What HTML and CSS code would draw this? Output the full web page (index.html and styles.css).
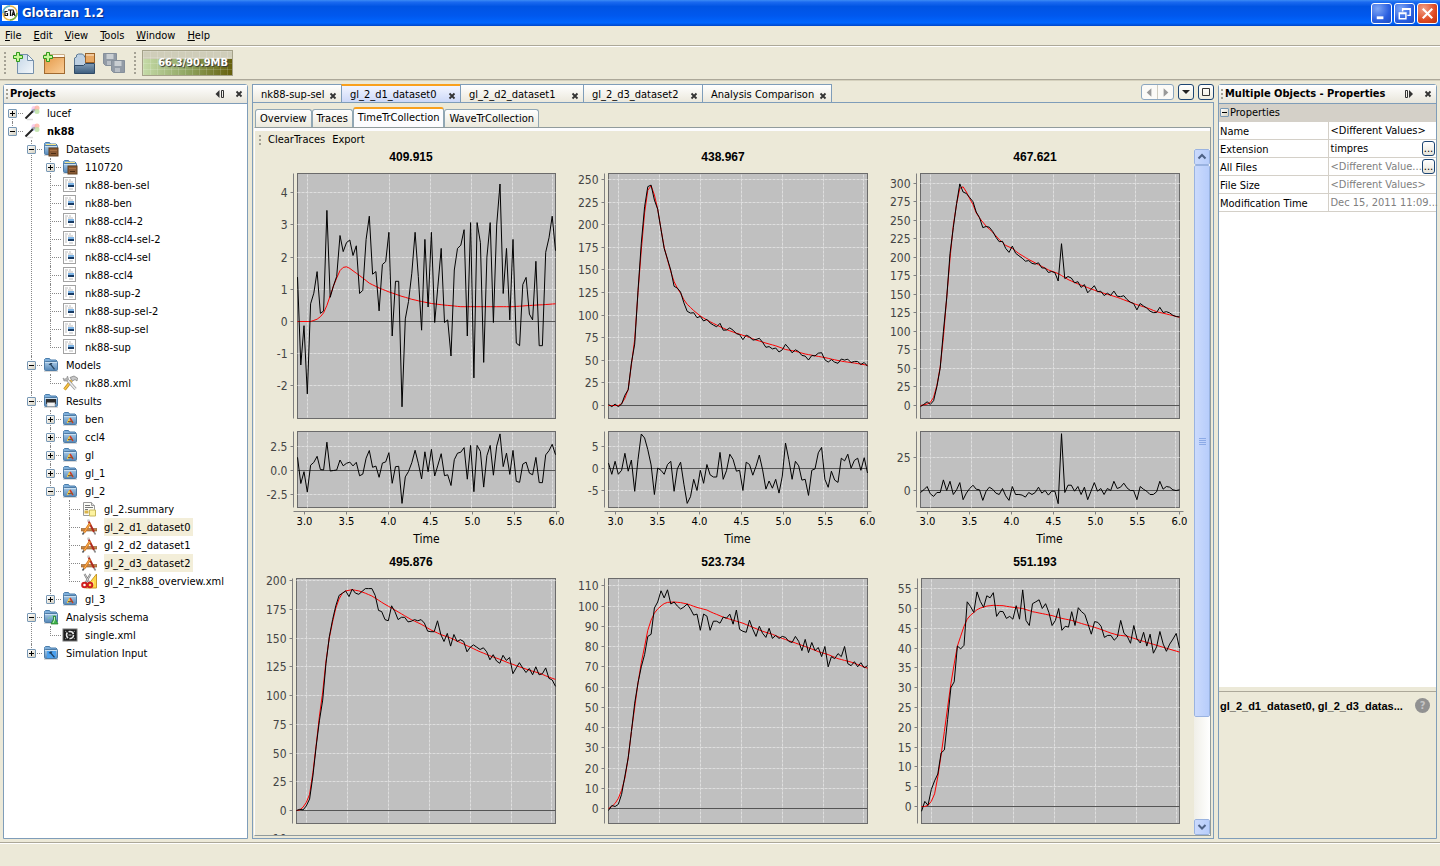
FILE: index.html
```html
<!DOCTYPE html>
<html lang="en">
<head>
    <meta charset="UTF-8">
    <meta name="viewport" content="width=device-width, initial-scale=1.0">
    <title>Glotaran 1.2</title>
    <link rel="stylesheet" href="styles.css">
</head>
<body>
    <!-- Icon set used by the tree and the toolbars -->
    <svg class="icon-set" width="0" height="0" aria-hidden="true">
        <defs>
            <linearGradient id="blueFolder" x1="0" y1="0" x2="0" y2="1">
                <stop offset="0" stop-color="#a9cbe8"/>
                <stop offset="1" stop-color="#5688b8"/>
            </linearGradient>
            <linearGradient id="paper" x1="0" y1="0" x2="1" y2="1">
                <stop offset="0" stop-color="#c3d5e6"/>
                <stop offset="1" stop-color="#f4f8fb"/>
            </linearGradient>
            <linearGradient id="orangeBox" x1="0" y1="0" x2="1" y2="1">
                <stop offset="0" stop-color="#e59a4a"/>
                <stop offset="1" stop-color="#fad09a"/>
            </linearGradient>
            <linearGradient id="openFolder" x1="0" y1="0" x2="0" y2="1">
                <stop offset="0" stop-color="#7f9bb5"/>
                <stop offset="1" stop-color="#3d5d7d"/>
            </linearGradient>
        </defs>
        <symbol id="i-folder" viewBox="0 0 16 16">
            <path d="M1.500 3.500v-1l1-1h4l1 1.500h5.500l1 1v3h-12.500z" fill="#7fb0dc" stroke="#4a7dab"/>
            <rect x="1.500" y="4.500" width="13" height="9" rx="1" fill="url(#blueFolder)" stroke="#4f7ca6"/>
            <path d="M2 5.500h12" stroke="#c9dff1"/>
            <path d="M1 14.500h14" stroke="#d8d8d8"/>
        </symbol>
        <symbol id="i-wand" viewBox="0 0 16 16">
            <circle cx="10" cy="3.500" r="2.500" fill="#f6c0e8" opacity=".8"/>
            <circle cx="13" cy="3" r="2.500" fill="#ffb3a0" opacity=".8"/>
            <circle cx="13" cy="6.500" r="2.500" fill="#b8e0a0" opacity=".8"/>
            <circle cx="9" cy="6" r="2" fill="#b8c8ff" opacity=".8"/>
            <path d="M3 14.500h6" stroke="#ddd" stroke-width="1.500"/>
            <path d="M1.500 13.500l8-8" stroke="#222" stroke-width="2"/>
            <path d="M8.800 6.200l2-2" stroke="#aaa" stroke-width="2"/>
        </symbol>
        <symbol id="i-folder-data" viewBox="0 0 16 16">
            <use href="#i-folder"/>
            <path d="M3 3.500h10" stroke="#f5e58a"/>
            <rect x="6" y="7" width="9" height="8" fill="#8a5a35" stroke="#63401f"/>
            <path d="M7 9.500h7" stroke="#a87245"/>
            <path d="M8 12.500h5" stroke="#4a2d14"/>
        </symbol>
        <symbol id="i-data" viewBox="0 0 16 16">
            <rect x="1.500" y=".5" width="12" height="14" fill="#fff" stroke="#a3a3a3"/>
            <path d="M3 3h3M7 3h2M3 5h2M6 5h5M3 7h2M3 9h2M3 11h2M7 12h4" stroke="#bbb"/>
            <rect x="6" y="6" width="6" height="4" fill="#7db4e6"/>
            <rect x="6" y="8" width="6" height="2" fill="#173a63"/>
        </symbol>
        <symbol id="i-folder-model" viewBox="0 0 16 16">
            <use href="#i-folder"/>
            <path d="M5.500 7.500l2-1.500h2l-1 1.500 3.500 4.500-1 .8-3.500-4.600z" fill="#27445f"/>
        </symbol>
        <symbol id="i-tools" viewBox="0 0 16 16">
            <path d="M2.500 14.500l7-9" stroke="#c08a1c" stroke-width="3"/>
            <path d="M2.500 14.500l7-9" stroke="#f6c44a" stroke-width="1.600"/>
            <path d="M13.500 14l-8-9" stroke="#9a9a9a" stroke-width="3"/>
            <path d="M13.500 14l-8-9" stroke="#ededed" stroke-width="1.500"/>
            <path d="M1 3l1 3h3l1.500-2-1-3-1 2.500-2 .5z" fill="#b8b8b8" stroke="#888" stroke-width=".6"/>
            <path d="M8 2.500l4-1.500 3.500 2-.5 3-2-1.500-2.500 1.500z" fill="#c8c8c8" stroke="#777" stroke-width=".7"/>
        </symbol>
        <symbol id="i-folder-results" viewBox="0 0 16 16">
            <use href="#i-folder"/>
            <rect x="3" y="6" width="10" height="5" fill="#2b2b2b"/>
            <path d="M4 9.500h8v4h-8z" fill="#f2f2f2" stroke="#888" stroke-width=".5"/>
        </symbol>
        <symbol id="i-folder-app" viewBox="0 0 16 16">
            <use href="#i-folder"/>
            <path d="M5.500 12l2.500-5" stroke="#ffd23c" stroke-width="1.500"/>
            <path d="M8 7l3 5" stroke="#d13a22" stroke-width="1.500"/>
            <path d="M6 10.500h5" stroke="#8a5a2b"/>
        </symbol>
        <symbol id="i-summary" viewBox="0 0 16 16">
            <path d="M2.500 1.500h8l3 3v10h-11z" fill="#fbfbf6" stroke="#999"/>
            <path d="M10.500 1.500v3h3" fill="#ddd" stroke="#999"/>
            <path d="M4 4.500h5M4 6.500h8M4 8.500h3" stroke="#777"/>
            <rect x="3.500" y="9.500" width="4" height="3" fill="#d9b34a"/>
            <path d="M8.500 9h6v6h-6z" fill="#fdf3a0" stroke="#c9b85c"/>
        </symbol>
        <symbol id="i-app" viewBox="0 0 16 16">
            <path d="M0 9.500h16v2.500h-16z" fill="#c2854a" stroke="#8a5a2b" stroke-width=".6"/>
            <path d="M7.500 2l5.500 11" stroke="#b02a1c" stroke-width="2"/>
            <path d="M13 13l1.500 2.500" stroke="#888" stroke-width="1.500"/>
            <path d="M3 13.500l6-9" stroke="#d9781a" stroke-width="2.400"/>
            <path d="M3 13.500l6-9" stroke="#fbb45a"/>
            <path d="M1.500 15.500l1.500-2" stroke="#555" stroke-width="1.500"/>
            <circle cx="7.500" cy="1.500" r="1.300" fill="#c8c8c8"/>
        </symbol>
        <symbol id="i-cut" viewBox="0 0 16 16">
            <path d="M15.500 1v14h-11z" fill="#ffd84a" stroke="#c9982a"/>
            <path d="M12.500 8v4h-3z" fill="#fff6cc"/>
            <path d="M3.500 1l5 9M9.500 1l-5 9" stroke="#777" stroke-width="2"/>
            <path d="M3.500 1l5 9M9.500 1l-5 9" stroke="#ddd" stroke-width=".8"/>
            <circle cx="3.500" cy="12" r="2.300" fill="none" stroke="#cf1f1f" stroke-width="2"/>
            <circle cx="9" cy="12" r="2.300" fill="none" stroke="#cf1f1f" stroke-width="2"/>
        </symbol>
        <symbol id="i-folder-schema" viewBox="0 0 16 16">
            <use href="#i-folder"/>
            <path d="M5 10c2-4 3 1 5-4" stroke="#7bd0a0" fill="none"/>
            <path d="M10.500 7h2v3l2.500 5h-7l2.500-5z" fill="#3fb54a" stroke="#1f7a2a" stroke-width=".7"/>
            <path d="M11.500 8v3l-1.500 3" stroke="#c6f3c8" fill="none"/>
        </symbol>
        <symbol id="i-schema" viewBox="0 0 16 16">
            <rect x="1" y="2" width="14" height="12" fill="#1c1c1c" stroke="#777"/>
            <circle cx="8" cy="8" r="3.500" fill="none" stroke="#e8e8e8" stroke-width="1.600" stroke-dasharray="6 1.300"/>
            <path d="M6.500 8h3" stroke="#999" stroke-width="1.500"/>
            <path d="M3 4l1.500 1M13 4l-1.500 1M3 12l1.500-1M13 12l-1.500-1" stroke="#999"/>
        </symbol>
        <symbol id="i-folder-sim" viewBox="0 0 16 16">
            <use href="#i-folder"/>
            <rect x="4" y="6" width="9" height="7" fill="#4aa0ee"/>
            <path d="M5.500 8l2-1.500h2l-1 1.500 3.500 4-1 .8-3.500-4z" fill="#1f3c5c"/>
        </symbol>
        <symbol id="i-close" viewBox="0 0 8 8">
            <path d="M1.500 1.500l5 5M6.500 1.500l-5 5" stroke="#333" stroke-width="1.800"/>
        </symbol>
        <symbol id="i-slide-left" viewBox="0 0 10 10">
            <path d="M4.500 1v8l-4-4z" fill="#333"/>
            <path d="M6.500 1.500h2v7h-2z" fill="none" stroke="#333"/>
        </symbol>
        <symbol id="i-slide-right" viewBox="0 0 10 10">
            <path d="M5 1v8l4-4z" fill="#333"/>
            <path d="M1.500 1.500h2v7h-2z" fill="none" stroke="#333"/>
        </symbol>
    </svg>

    <header class="title-bar">
        <svg class="app-logo" viewBox="0 0 16 16">
            <rect width="16" height="16" fill="#fff"/>
            <circle cx="8" cy="8" r="7" fill="none" stroke="#e8b84a" stroke-width="1.500"/>
            <path d="M1 8a7 7 0 0 1 7-7" fill="none" stroke="#58b8d8" stroke-width="1.500"/>
            <path d="M8 15a7 7 0 0 0 7-7" fill="none" stroke="#6fae4a" stroke-width="1.500"/>
            <path d="M5.500 6.500h-2.500v4h2.500v-2h-1M6 5h5M8.500 5v6M10 11l1.500-5 1.500 5M10.500 9.500h2.500" fill="none" stroke="#111" stroke-width="1.200"/>
        </svg>
        <h1>Glotaran 1.2</h1>
        <div class="window-buttons">
            <button class="win-btn" aria-label="Minimize"><svg viewBox="0 0 20 20"><path d="M5 14.500h7" stroke="#fff" stroke-width="3"/></svg></button>
            <button class="win-btn" aria-label="Restore"><svg viewBox="0 0 20 20"><path d="M8 8v-3h8v7h-3M8 5.500h8" fill="none" stroke="#fff" stroke-width="1.500"/><path d="M4.500 9.500h7v6h-7zM4.500 10h7" fill="none" stroke="#fff" stroke-width="1.500"/></svg></button>
            <button class="win-btn win-close" aria-label="Close"><svg viewBox="0 0 20 20"><path d="M5 5l10 10M15 5l-10 10" stroke="#fff" stroke-width="2.200"/></svg></button>
        </div>
    </header>

    <nav class="menu-bar">
        <button><u>F</u>ile</button>
        <button><u>E</u>dit</button>
        <button><u>V</u>iew</button>
        <button><u>T</u>ools</button>
        <button><u>W</u>indow</button>
        <button><u>H</u>elp</button>
    </nav>

    <div class="tool-bar">
        <div class="tool-group">
            <span class="grip"></span>
            <button aria-label="New file">
                <svg viewBox="0 0 24 24">
                    <path d="M5.500 3.500h10l6 6v13h-16z" fill="url(#paper)" stroke="#7590ab"/>
                    <path d="M15.500 3.500v6h6z" fill="#eef4f9" stroke="#7590ab"/>
                    <path d="M4.500 1.500h3v3h3v3h-3v3h-3v-3h-3v-3h3z" fill="#c9f59a" stroke="#2f9a1c"/>
                </svg>
            </button>
            <button aria-label="New project">
                <svg viewBox="0 0 24 24">
                    <path d="M2.500 7.500v-4h20v4z" fill="#fdf7ee" stroke="#c9ac86"/>
                    <rect x="2.500" y="6.500" width="20" height="16" fill="url(#orangeBox)" stroke="#a06a30"/>
                    <path d="M4.500 1.500h3v3h3v3h-3v3h-3v-3h-3v-3h3z" fill="#c9f59a" stroke="#2f9a1c"/>
                </svg>
            </button>
            <button aria-label="Open project">
                <svg viewBox="0 0 24 24">
                    <path d="M2.500 20v-13l2-1v-2l2-1h4l2 2v1h7v14z" fill="#bdd0e2" stroke="#5d7a96"/>
                    <rect x="13.500" y="2.500" width="9" height="9" fill="#e7a864" stroke="#9a6228"/>
                    <path d="M14 4h8" stroke="#f9e6cf"/>
                    <path d="M2.500 22.500v-8h9l2-2h9v10z" fill="url(#openFolder)" stroke="#2f4a66"/>
                </svg>
            </button>
            <button aria-label="Save all" disabled>
                <svg viewBox="0 0 24 24">
                    <path d="M1.500 2.500h13v12h-11l-2-2z" fill="#929ba6" stroke="#858f9a"/>
                    <path d="M4.500 3h7v5h-7z" fill="#c9ced2"/><path d="M5 14v-4h5v4" fill="#b8bec5"/>
                    <path d="M9.500 9.500h13v12h-11l-2-2z" fill="#929ba6" stroke="#858f9a"/>
                    <path d="M12.500 10h7v5h-7z" fill="#c9ced2"/><path d="M13 21v-4h5v4" fill="#b8bec5"/>
                </svg>
            </button>
        </div>
        <div class="tool-group">
            <span class="grip"></span>
            <button class="memory">66.3/90.9MB</button>
        </div>
    </div>

    <main>
        <section class="panel projects">
            <div class="panel-head">
                <span class="grip"></span>
                <h2>Projects</h2>
                <button aria-label="Minimize panel"><svg width="10" height="10"><use href="#i-slide-left"/></svg></button>
                <button aria-label="Close panel"><svg width="8" height="8"><use href="#i-close"/></svg></button>
            </div>
            <ul class="tree">
                <li>
                    <div class="row"><button class="toggle closed" aria-label="Expand"></button><svg><use href="#i-wand"/></svg><span>lucef</span></div>
                </li>
                <li>
                    <div class="row"><button class="toggle" aria-label="Collapse"></button><svg><use href="#i-wand"/></svg><b>nk88</b></div>
                    <ul>
                        <li>
                            <div class="row"><button class="toggle" aria-label="Collapse"></button><svg><use href="#i-folder-data"/></svg><span>Datasets</span></div>
                            <ul>
                                <li><div class="row"><button class="toggle closed" aria-label="Expand"></button><svg><use href="#i-folder-data"/></svg><span>110720</span></div></li>
                                <li><div class="row"><svg><use href="#i-data"/></svg><span>nk88-ben-sel</span></div></li>
                                <li><div class="row"><svg><use href="#i-data"/></svg><span>nk88-ben</span></div></li>
                                <li><div class="row"><svg><use href="#i-data"/></svg><span>nk88-ccl4-2</span></div></li>
                                <li><div class="row"><svg><use href="#i-data"/></svg><span>nk88-ccl4-sel-2</span></div></li>
                                <li><div class="row"><svg><use href="#i-data"/></svg><span>nk88-ccl4-sel</span></div></li>
                                <li><div class="row"><svg><use href="#i-data"/></svg><span>nk88-ccl4</span></div></li>
                                <li><div class="row"><svg><use href="#i-data"/></svg><span>nk88-sup-2</span></div></li>
                                <li><div class="row"><svg><use href="#i-data"/></svg><span>nk88-sup-sel-2</span></div></li>
                                <li><div class="row"><svg><use href="#i-data"/></svg><span>nk88-sup-sel</span></div></li>
                                <li><div class="row"><svg><use href="#i-data"/></svg><span>nk88-sup</span></div></li>
                            </ul>
                        </li>
                        <li>
                            <div class="row"><button class="toggle" aria-label="Collapse"></button><svg><use href="#i-folder-model"/></svg><span>Models</span></div>
                            <ul>
                                <li><div class="row"><svg><use href="#i-tools"/></svg><span>nk88.xml</span></div></li>
                            </ul>
                        </li>
                        <li>
                            <div class="row"><button class="toggle" aria-label="Collapse"></button><svg><use href="#i-folder-results"/></svg><span>Results</span></div>
                            <ul>
                                <li><div class="row"><button class="toggle closed" aria-label="Expand"></button><svg><use href="#i-folder-app"/></svg><span>ben</span></div></li>
                                <li><div class="row"><button class="toggle closed" aria-label="Expand"></button><svg><use href="#i-folder-app"/></svg><span>ccl4</span></div></li>
                                <li><div class="row"><button class="toggle closed" aria-label="Expand"></button><svg><use href="#i-folder-app"/></svg><span>gl</span></div></li>
                                <li><div class="row"><button class="toggle closed" aria-label="Expand"></button><svg><use href="#i-folder-app"/></svg><span>gl_1</span></div></li>
                                <li>
                                    <div class="row"><button class="toggle" aria-label="Collapse"></button><svg><use href="#i-folder-app"/></svg><span>gl_2</span></div>
                                    <ul>
                                        <li><div class="row"><svg><use href="#i-summary"/></svg><span>gl_2.summary</span></div></li>
                                        <li><div class="row"><svg><use href="#i-app"/></svg><span class="selected">gl_2_d1_dataset0</span></div></li>
                                        <li><div class="row"><svg><use href="#i-app"/></svg><span>gl_2_d2_dataset1</span></div></li>
                                        <li><div class="row"><svg><use href="#i-app"/></svg><span class="selected">gl_2_d3_dataset2</span></div></li>
                                        <li><div class="row"><svg><use href="#i-cut"/></svg><span>gl_2_nk88_overview.xml</span></div></li>
                                    </ul>
                                </li>
                                <li><div class="row"><button class="toggle closed" aria-label="Expand"></button><svg><use href="#i-folder-app"/></svg><span>gl_3</span></div></li>
                            </ul>
                        </li>
                        <li>
                            <div class="row"><button class="toggle" aria-label="Collapse"></button><svg><use href="#i-folder-schema"/></svg><span>Analysis schema</span></div>
                            <ul>
                                <li><div class="row"><svg><use href="#i-schema"/></svg><span>single.xml</span></div></li>
                            </ul>
                        </li>
                        <li>
                            <div class="row"><button class="toggle closed" aria-label="Expand"></button><svg><use href="#i-folder-sim"/></svg><span>Simulation Input</span></div>
                        </li>
                    </ul>
                </li>
            </ul>
        </section>

        <section class="editor">
            <div class="file-tabs">
                <div class="file-tab short"><button>nk88-sup-sel</button><button class="tab-close" aria-label="Close tab"><svg width="8" height="8"><use href="#i-close"/></svg></button></div>
                <div class="file-tab active"><button>gl_2_d1_dataset0</button><button class="tab-close" aria-label="Close tab"><svg width="8" height="8"><use href="#i-close"/></svg></button></div>
                <div class="file-tab wide"><button>gl_2_d2_dataset1</button><button class="tab-close" aria-label="Close tab"><svg width="8" height="8"><use href="#i-close"/></svg></button></div>
                <div class="file-tab"><button>gl_2_d3_dataset2</button><button class="tab-close" aria-label="Close tab"><svg width="8" height="8"><use href="#i-close"/></svg></button></div>
                <div class="file-tab long"><button>Analysis Comparison</button><button class="tab-close" aria-label="Close tab"><svg width="8" height="8"><use href="#i-close"/></svg></button></div>
                <div class="tab-controls">
                    <div class="scroll-pair">
                        <button aria-label="Scroll left" disabled><svg viewBox="0 0 16 16"><path d="M10 3.500v9l-5-4.500z" fill="#999"/></svg></button>
                        <button aria-label="Scroll right" disabled><svg viewBox="0 0 16 16"><path d="M6 3.500v9l5-4.500z" fill="#999"/></svg></button>
                    </div>
                    <button class="ctl" aria-label="Show documents"><svg viewBox="0 0 14 14"><path d="M3 5h8l-4 4z" fill="#222"/></svg></button>
                    <button class="ctl" aria-label="Maximize"><svg viewBox="0 0 14 14"><path d="M3.500 3.500h7v7h-7z" fill="none" stroke="#333"/></svg></button>
                </div>
            </div>
            <div class="editor-body">
                <div class="view-tabs">
                    <button>Overview</button>
                    <button>Traces</button>
                    <button class="active">TimeTrCollection</button>
                    <button>WaveTrCollection</button>
                </div>
                <div class="view">
                    <div class="view-tools">
                        <span class="grip"></span>
                        <button>ClearTraces</button>
                        <button>Export</button>
                    </div>
                    <div class="view-scroll">
                        <div class="charts" id="charts"></div>
                        <div class="scrollbar">
                            <button aria-label="Scroll up"><svg viewBox="0 0 14 14"><path d="M3.500 8.500l3.500-3.500 3.500 3.500" fill="none" stroke="#4d6185" stroke-width="2"/></svg></button>
                            <div class="thumb"><i></i><i></i><i></i><i></i></div>
                            <div class="track"></div>
                            <button aria-label="Scroll down"><svg viewBox="0 0 14 14"><path d="M3.500 5l3.500 3.500 3.500-3.500" fill="none" stroke="#4d6185" stroke-width="2"/></svg></button>
                        </div>
                    </div>
                </div>
            </div>
        </section>

        <section class="panel properties">
            <div class="panel-head">
                <span class="grip"></span>
                <h2>Multiple Objects - Properties</h2>
                <button aria-label="Minimize panel"><svg width="10" height="10"><use href="#i-slide-right"/></svg></button>
                <button aria-label="Close panel"><svg width="8" height="8"><use href="#i-close"/></svg></button>
            </div>
            <table>
                <thead>
                    <tr><th colspan="2"><button class="toggle" aria-label="Collapse"></button>Properties</th></tr>
                </thead>
                <tbody>
                    <tr><th>Name</th><td><div>&lt;Different Values&gt;</div></td></tr>
                    <tr><th>Extension</th><td><div><span>timpres</span><button class="more">...</button></div></td></tr>
                    <tr><th>All Files</th><td class="dim"><div><span>&lt;Different Value...</span><button class="more">...</button></div></td></tr>
                    <tr><th>File Size</th><td class="dim"><div>&lt;Different Values&gt;</div></td></tr>
                    <tr><th>Modification Time</th><td class="dim"><div>Dec 15, 2011 11:09...</div></td></tr>
                </tbody>
            </table>
            <div class="description">
                <strong>gl_2_d1_dataset0, gl_2_d3_datas...</strong>
                <button class="help" aria-label="Help">?</button>
            </div>
        </section>
    </main>

    <footer class="status-bar"></footer>

    <script src="charts.js"></script>
</body>
</html>
```
FILE: styles.css
```css
* {
    box-sizing: border-box;
}

body {
    margin: 0;
    height: 100vh;
    display: flex;
    flex-direction: column;
    overflow: hidden;
    background: #ece9d8;
    color: #000;
    font-family: "DejaVu Sans Condensed", "DejaVu Sans", sans-serif;
    font-size: 11px;
    line-height: 14px;
}

button {
    margin: 0;
    padding: 0;
    border: none;
    background: none;
    color: inherit;
    font: inherit;
    white-space: nowrap;
}

svg {
    display: block;
    flex: none;
}

.icon-set {
    position: absolute;
}

.grip {
    width: 2px;
    flex: none;
    background: repeating-linear-gradient(#a5a295 0 2px, transparent 2px 4px);
}

/* Title bar */
.title-bar {
    display: flex;
    align-items: center;
    flex: none;
    height: 26px;
    padding: 0 2px;
    background: linear-gradient(#3c8cf5 0, #1b6af0 8%, #0054e3 25%, #0058ee 60%, #0066ff 88%, #0046c8 100%);
}

.title-bar h1 {
    margin: 0 auto 0 4px;
    font-size: 13px;
    color: #fff;
    text-shadow: 1px 1px 1px #0a2a80;
}

.app-logo {
    width: 16px;
    height: 16px;
}

.window-buttons {
    display: flex;
    gap: 2px;
}

.win-btn {
    width: 21px;
    height: 21px;
    border: 1px solid #fff;
    border-radius: 3px;
    background: radial-gradient(circle at 30% 25%, #7ea6f5, #2a5fe0 60%, #1d4bc0);
}

.win-close {
    background: radial-gradient(circle at 30% 25%, #f0a088, #df4a22 60%, #b8300e);
}

/* Menu and toolbar */
.menu-bar {
    display: flex;
    flex: none;
    gap: 12px;
    height: 21px;
    padding: 0 5px 1px;
    border-bottom: 1px solid #fff;
    box-shadow: inset 0 -1px #aca899;
}

.tool-bar {
    display: flex;
    flex: none;
    gap: 8px;
    height: 34px;
    padding: 0 4px 2px;
    border-bottom: 1px solid #d5d1be;
    box-shadow: inset 0 -1px #aca899;
}

.tool-group {
    display: flex;
    align-items: center;
    gap: 6px;
}

.tool-bar .grip {
    height: 22px;
}

.tool-bar button svg {
    width: 24px;
    height: 24px;
}

.tool-bar .memory {
    width: 91px;
    height: 26px;
    padding-right: 4px;
    border: 1px solid #a5a28a;
    text-align: right;
    font-weight: bold;
    color: #fff;
    text-shadow: 1px 1px 1px #333;
    background:
        repeating-linear-gradient(90deg, rgba(255, 255, 255, .15) 0 1px, transparent 1px 7px),
        repeating-linear-gradient(rgba(255, 255, 255, .15) 0 1px, transparent 1px 6px),
        linear-gradient(#cfcdb9 0 8px, transparent 8px),
        linear-gradient(90deg, #c5dba8, #8fa561 50%, #66600c);
}

/* Main columns */
main {
    display: flex;
    flex: 1;
    min-height: 0;
    gap: 4px;
    padding: 3px;
}

.panel {
    display: flex;
    flex-direction: column;
    border: 1px solid #7f9db9;
    border-radius: 3px 3px 0 0;
    background: #fff;
}

.projects {
    width: 245px;
}

.properties {
    width: 219px;
}

.panel-head {
    display: flex;
    align-items: center;
    flex: none;
    gap: 10px;
    height: 19px;
    padding: 0 4px 0 2px;
    border-bottom: 1px solid #7f9db9;
    background: linear-gradient(#fff, #e8e5da);
}

.panel-head .grip {
    height: 10px;
}

.panel-head h2 {
    flex: 1;
    margin: 0 0 0 -8px;
    font-size: 11px;
    white-space: nowrap;
}

/* Project tree */
.tree,
.tree ul {
    margin: 0;
    padding: 0;
    list-style: none;
}

.tree {
    padding-left: 4px;
}

.tree ul {
    margin-left: 19px;
}

.tree li {
    position: relative;
}

/* dotted connector running down beside the siblings */
.tree li::before {
    content: "";
    position: absolute;
    left: 4px;
    top: 0;
    bottom: 0;
    border-left: 1px dotted #888;
}

.tree li:last-child::before {
    bottom: auto;
    height: 10px;
}

.tree > li:first-child::before {
    top: 9px;
}

.row {
    position: relative;
    display: flex;
    align-items: center;
    height: 18px;
    padding-left: 16px;
}

.row::before {
    content: "";
    position: absolute;
    left: 4px;
    top: 9px;
    width: 11px;
    border-top: 1px dotted #888;
}

.row svg {
    width: 16px;
    height: 16px;
    margin-right: 7px;
}

.row span,
.row b {
    padding: 2px 3px 0 0;
    line-height: 16px;
    white-space: nowrap;
}

.row .selected {
    background: #f3eed9;
}

.toggle {
    position: relative;
    width: 9px;
    height: 9px;
    flex: none;
    border: 1px solid #7898b5;
    border-radius: 1px;
    background: linear-gradient(#000, #000) center / 5px 1px no-repeat, linear-gradient(135deg, #fff, #d5d0c0);
}

.toggle.closed {
    background:
        linear-gradient(#000, #000) center / 5px 1px no-repeat,
        linear-gradient(#000, #000) center / 1px 5px no-repeat,
        linear-gradient(135deg, #fff, #d5d0c0);
}

.row .toggle {
    margin: 0 7px 0 -16px;
}

/* Editor area */
.editor {
    display: flex;
    flex: 1;
    flex-direction: column;
    min-width: 0;
}

.file-tabs {
    display: flex;
    flex: none;
    height: 18px;
}

.file-tab {
    display: flex;
    align-items: center;
    justify-content: space-between;
    width: 119px;
    padding: 2px 4px 0 8px;
    border: 1px solid #7f9db9;
    border-bottom: none;
    border-right: none;
    background: linear-gradient(#fff, #ebe8dc);
}

.file-tab.short {
    width: 89px;
}

.file-tab.wide {
    width: 123px;
}

.file-tab.long {
    width: 129px;
}

.file-tab.active {
    border-top: 2px solid #f9a01c;
    padding-top: 1px;
    background: linear-gradient(#f2f5ff, #ccd8f8);
}

.tab-close {
    padding-top: 2px;
}

.tab-controls {
    display: flex;
    flex: 1;
    align-items: flex-start;
    justify-content: flex-end;
    gap: 4px;
    border-left: 1px solid #7f9db9;
}

.scroll-pair {
    display: flex;
    width: 33px;
    height: 16px;
    border: 1px solid #8ba6bf;
    border-radius: 3px;
    background: #fbfaf7;
}

.scroll-pair button {
    flex: 1;
}

.scroll-pair button + button {
    border-left: 1px solid #cfccc0;
}

.ctl {
    width: 16px;
    height: 16px;
    border: 1px solid #1c4573;
    border-radius: 3px;
    background: linear-gradient(#fff, #eeecdf);
}

.editor-body {
    display: flex;
    flex: 1;
    flex-direction: column;
    min-height: 0;
    padding: 4px 2px 2px 1px;
    border: 1px solid #7f9db9;
}

.view-tabs {
    display: flex;
    align-items: flex-end;
    flex: none;
    height: 20px;
    padding-left: 1px;
}

.view-tabs button {
    height: 18px;
    padding: 1px 4px 0;
    border: 1px solid #91a7b4;
    border-bottom: none;
    border-radius: 3px 3px 0 0;
    background: linear-gradient(#fff, #ebe9dd);
}

.view-tabs .active {
    height: 20px;
    padding: 0 4px 1px;
    border-top: 2px solid #f9a01c;
    background: #fcfcfe;
}

.view {
    display: flex;
    flex: 1;
    flex-direction: column;
    min-height: 0;
    border: 1px solid #919b9c;
    border-left-color: #fcfcfe;
}

.view-tools {
    display: flex;
    align-items: center;
    flex: none;
    gap: 7px;
    height: 21px;
    padding-left: 4px;
    border-top: 3px solid #fcfcfe;
}

.view-tools .grip {
    height: 10px;
}

.view-scroll {
    display: flex;
    flex: 1;
    min-height: 0;
}

.charts {
    display: grid;
    grid-template-columns: repeat(3, 1fr);
    grid-auto-rows: max-content;
    align-content: start;
    flex: 1;
    min-width: 0;
    padding: 0 1px 0 2px;
    overflow: hidden;
}

.charts svg {
    width: 100%;
    aspect-ratio: 312 / 405;
}

.scrollbar {
    display: flex;
    flex-direction: column;
    width: 16px;
    background: linear-gradient(90deg, #f0efe8, #fff);
}

.scrollbar button,
.thumb {
    border: 1px solid #fff;
    border-radius: 2px;
    outline: 1px solid #9ab3e0;
    outline-offset: -1px;
    background: linear-gradient(90deg, #cbdafc, #b7cdfb);
}

.scrollbar button {
    height: 16px;
}

.thumb {
    display: flex;
    flex-direction: column;
    align-items: center;
    justify-content: center;
    gap: 1px;
    flex: 552;
}

.thumb i {
    width: 7px;
    height: 1px;
    background: #8caae6;
}

.track {
    flex: 102;
}

/* Chart drawing */
.plot {
    fill: #c0c0c0;
    stroke: #6b6b6b;
}

.grid {
    stroke: #dedede;
    stroke-dasharray: 3 1;
}

.axis {
    stroke: #808080;
}

.zero {
    stroke: #555;
}

.trace {
    fill: none;
    stroke: #000;
}

.fit {
    fill: none;
    stroke: #f00;
}

.chart-title {
    font: bold 12px "Liberation Sans", sans-serif;
    text-anchor: middle;
}

.y-label {
    font-size: 12px;
    fill: #444;
    text-anchor: end;
}

.x-label {
    font: 10px "DejaVu Sans", sans-serif;
    text-anchor: middle;
}

.x-title {
    font-size: 12px;
    text-anchor: middle;
}

/* Properties */
.properties table {
    width: 100%;
    table-layout: fixed;
    border-collapse: separate;
    border-spacing: 0;
}

.properties th,
.properties td {
    height: 18px;
    padding: 0 1px;
    border-bottom: 1px solid #d4d0c8;
    text-align: left;
    font-weight: normal;
    white-space: nowrap;
}

.properties tbody th {
    padding-top: 2px;
}

.properties thead th {
    background: #d4d0c8;
}

.properties thead .toggle {
    margin-right: 1px;
}

.properties td {
    padding-left: 2px;
    border-left: 1px solid #d4d0c8;
}

.properties td div {
    display: flex;
    align-items: center;
    height: 17px;
}

.properties td span {
    flex: 1;
}

.dim {
    color: #808080;
}

.more {
    width: 13px;
    height: 15px;
    border: 1px solid #1c4573;
    border-radius: 3px;
    background: linear-gradient(#fff, #e8e5da);
    color: #000;
}

.description {
    display: flex;
    align-items: flex-start;
    gap: 8px;
    height: 147px;
    margin-top: auto;
    padding: 6px 6px 0 1px;
    border-top: 1px solid #aca899;
    background: #ece9d8;
    box-shadow: 0 -4px #ece9d8;
}

.description strong {
    flex: 1;
    padding-top: 1px;
    white-space: nowrap;
    font-family: "Liberation Sans", sans-serif;
    font-size: 11px;
}

.help {
    width: 15px;
    height: 15px;
    border-radius: 50%;
    background: #919191;
    color: #c4c4c4;
    font-weight: bold;
}

/* Status bar */
.status-bar {
    flex: none;
    height: 24px;
    border-top: 1px solid #aca899;
    box-shadow: inset 0 1px #fff;
}
```
FILE: charts.js
```js
// Every trace has 80 samples, 0.04 apart. "fit" holds [sample, value] knots.
// A chart lists either "residual" (trace = fit + residual) or "trace".
const charts = [
    {
        title: '409.915', left: 40.5,
        main: { zero: 172.5, step: 1, px: 32.2, from: -2, to: 4 },
        rest: { zero: 321.5, step: 2.5, px: 24, from: -1, to: 1, digits: 1 },
        fit: [[0, 0], [4, 0], [6, .07], [7, .15], [8, .27], [9, .5], [10, .8], [11, 1.1], [12, 1.35], [13, 1.58], [14, 1.68], [15, 1.7], [16, 1.65], [18, 1.5], [20, 1.35], [22, 1.19], [25, 1.04], [28, .92], [32, .78], [35, .69], [38, .62], [41, .56], [45, .51], [50, .46], [66, .46], [70, .49], [75, .52], [79, .55]],
        trace: [1.38, -1.35, -.13, -2.25, .55, .88, 1.55, .25, .33, 3.45, .75, 1.1, 1.4, 2.67, 2.17, 2.45, 2.53, 2.05, 2.35, .87, .97, 2.55, 3.27, 1.47, 1.55, .33, 1.77, 1.86, 2.77, -.45, 1.25, 1.25, -2.65, .08, .62, 1.5, 2.77, 1.4, -.27, 2.55, .45, 2.77, -.03, 1.1, 2.27, -.03, .05, -1.07, 1.6, 2.27, 2.37, 2.85, -.45, 3.07, -1.75, 3.07, 2.45, -1.27, 2, 3.07, -.03, 3, 4.27, .87, 2.27, .05, 2.55, -.67, -.75, 1.15, 1.37, .23, .05, 1.87, -.75, -.75, 2.15, 2.6, 3.27, 2.2]
    },
    {
        title: '438.967', left: 39.5,
        main: { zero: 256.5, step: 25, px: 22.6, from: 0, to: 10 },
        rest: { zero: 319.5, step: 5, px: 22.4, from: -1, to: 1 },
        fit: [[0, 0], [3, 0], [4, 2], [5, 8], [6, 18], [7, 45], [8, 73], [9, 125], [10, 172], [11, 213], [12, 238], [13, 243], [14, 233], [15, 217], [16, 195], [17, 175], [18, 161], [19, 148], [20, 137], [21, 130], [22, 124], [23, 117], [24, 112], [26, 105], [28, 99], [30, 94.5], [33, 89], [36, 84], [39, 80], [42, 76.5], [45, 72.5], [48, 69], [51, 66], [54, 62], [57, 60], [60, 57], [63, 55], [66, 53], [69, 50.5], [72, 48.5], [75, 47], [79, 44.5]],
        residual: [1.2, -1.3, 1.6, -1.3, -.4, 3.4, -.6, 1.9, -5.1, 2, 7.7, 6.8, 4.2, .8, -5.8, .1, -.4, -1.3, .9, 1.6, -5.1, -.1, 1.4, -3.5, -7.8, -6.3, -2.4, -4.9, -.4, -3.3, .9, -1.4, -1.9, -1.9, 3.6, -2.4, -.5, 3.2, 2, -.6, -.4, -4.9, 1.4, .9, -1.5, .5, 3, -.3, -4.6, -2.8, -4.4, -2.4, -5.5, -1.7, 5.7, 2, -2.4, 1.6, .6, -2.6, -2.4, -6, -.4, -.1, 3.5, 4.7, -2.4, -4.2, -.6, -2.6, -3.1, 2.3, 1.7, 3.2, .1, 1.8, 2.3, -.4, 2.4, -1]
    },
    {
        title: '467.621', left: 39.5,
        main: { zero: 256.5, step: 25, px: 18.53, from: 0, to: 12 },
        rest: { zero: 341.5, step: 25, px: 33, from: 0, to: 1 },
        fit: [[0, 0], [2, 2], [3, 4], [4, 11], [5, 27], [6, 52], [7, 92], [8, 145], [9, 198], [10, 243], [11, 272], [12, 293], [13, 295], [14, 288], [15, 279], [16, 271], [17, 260], [18, 253], [20, 242], [22, 234], [24, 224], [26, 216], [28, 212], [30, 205], [33, 197], [36, 190], [39, 183], [42, 178], [45, 170], [48, 164], [51, 159], [54, 154], [57, 150], [60, 146], [63, 141], [66, 136], [69, 132], [72, 126.5], [75, 123.5], [79, 119]],
        residual: [-1.5, .5, 3, -2.5, -4.5, -1.5, -1.5, 8, 0, 7, -3, .5, 6, -7, -2, 1.5, 4, 1, .5, -7.5, -.5, 2.5, 1, -2, -3, 1.5, -4, -7.5, 3, -3, -3, -3.5, -5, -1.5, -3, -1.5, 2.5, -2, 0, -3.5, -.5, -.5, -10, 43, -1.5, 4, 4, -.5, 3, -3, 2.5, -7, -.5, 6, -.5, 1.5, -3, 1.5, 0, 7, 1.5, 2.5, 5.5, 2, 0, 0, -7, 3, 1, -.5, -3, -3, -1, 7, 1, 3, 2.5, .5, 0, .5]
    },
    {
        title: '495.876', left: 39.5,
        main: { zero: 256.5, step: 25, px: 28.75, from: 0, to: 8 },
        rest: { zero: 320.5, step: 10, px: 36, from: 0, to: 1 },
        fit: [[0, 0], [1, .5], [2, 3], [3, 7], [4, 14], [5, 33], [6, 57], [7, 82], [8, 103], [9, 130], [10, 150], [11, 164], [12, 176], [13, 184], [14, 189], [15, 191], [17, 192], [19, 191], [21, 189], [23, 186.5], [26, 181], [29, 176], [32, 171], [35, 166], [38, 162], [41, 157], [44, 153], [47, 150], [50, 146], [53, 142], [56, 138], [59, 134.5], [62, 131.5], [65, 128], [68, 125], [71, 122], [74, 119.5], [77, 116], [79, 114]],
        trace: [0, 1, .5, 4, 10, 30, 56, 78, 96, 128, 151, 166, 178, 187, 189, 191, 186, 192.5, 189, 188, 190.5, 193, 193, 193, 187, 174, 173, 166, 165, 178, 173, 166, 168, 168, 164, 164.5, 166, 165, 166, 163, 156, 155.5, 155.5, 165, 153, 147, 154, 143, 153, 147, 148.5, 147, 138, 142, 144, 142, 140, 141.5, 138, 131, 135.5, 130, 128, 135, 130.5, 133, 119, 124, 128.5, 124, 120, 123.5, 118, 125, 118, 119, 124, 115, 113.5, 108]
    },
    {
        title: '523.734', left: 39.5,
        main: { zero: 254.5, step: 10, px: 20.25, from: 0, to: 11 },
        rest: { zero: 320.5, step: 10, px: 26, from: -1, to: 1 },
        fit: [[0, 0], [1, 1], [2, 2.5], [3, 5], [4, 9], [5, 15], [6, 25], [7, 38], [8, 50], [9, 62], [10, 72], [11, 80], [12, 88], [13, 93], [14, 96.5], [15, 98.5], [16, 100], [17, 101.2], [18, 101.8], [20, 102], [22, 101.7], [24, 101], [27, 99.3], [30, 98], [32, 96.5], [35, 94.5], [38, 93], [41, 91.5], [44, 89.5], [47, 87.5], [50, 86], [53, 84], [56, 82.3], [60, 80], [64, 77.5], [67, 76], [70, 74], [74, 72.3], [79, 69.3]],
        trace: [-1, 1.5, 1, 2, 7, 16, 25, 38, 52, 62, 70, 76, 85, 86, 99, 102, 107.5, 104, 108, 101, 102, 100, 98.5, 99.5, 101, 98.5, 95.5, 96, 88, 96, 95, 88, 92.5, 92.5, 91.5, 94.5, 94, 96, 91, 98, 88.5, 87.5, 87, 93, 88.5, 85, 90, 86.5, 84.5, 89, 84, 85.5, 84, 85, 84.5, 82.5, 82, 85, 82.5, 78, 83.5, 77, 82, 78, 79.5, 75, 80, 70, 75, 74, 76.5, 75, 80, 71.5, 70.5, 72.5, 70, 72, 69.5, 70.5]
    },
    {
        title: '551.193', left: 40.5,
        main: { zero: 252.5, step: 5, px: 19.8, from: 0, to: 11 },
        rest: { zero: 320.5, step: 5, px: 26, from: -1, to: 1 },
        fit: [[0, 0], [1, 0], [2, .3], [3, 1.3], [4, 3.2], [5, 7.5], [6, 13], [7, 19], [8, 25], [9, 31], [10, 36], [11, 40.5], [12, 43], [13, 45.5], [14, 47.3], [15, 48.3], [16, 49], [17, 49.7], [18, 50.1], [20, 50.6], [22, 50.8], [25, 50.7], [28, 50.3], [31, 50], [34, 49.2], [37, 48.7], [40, 48.2], [43, 47.5], [46, 47], [49, 46.2], [52, 45.5], [55, 44.7], [58, 43.8], [60, 43.3], [63, 43], [66, 42.2], [70, 41.2], [74, 40.2], [79, 39]],
        trace: [-1.2, 1.3, .3, 4.3, 6.5, 8.2, 13.5, 14.3, 22, 30, 31.5, 40.5, 39.8, 40.7, 51.7, 50.5, 49, 54.2, 51.8, 50.3, 53.2, 52.7, 54, 48, 49.3, 49.2, 47.5, 48, 47.3, 50.7, 47.3, 54.7, 47, 45.7, 51.2, 51.7, 52.2, 50, 51.2, 49, 45.7, 47, 50, 44.5, 45.5, 45.3, 49.2, 45.7, 50.2, 49.2, 48.5, 46, 43.5, 46.7, 46.5, 45.5, 42.7, 43.2, 43.2, 42, 42.8, 47, 43.7, 43, 41.2, 45.7, 42.3, 41.3, 44, 40.5, 43.5, 38.7, 40.3, 44.2, 41, 39.2, 41, 42.3, 43.7, 40]
    }
];

const RIGHT = 298.5;
const MAIN = [24.5, 269.5];
const REST = [282.5, 358.5];
const SAMPLES = 80;

const line = (cls, x1, y1, x2, y2) => `<line class="${cls}" x1="${x1}" y1="${y1}" x2="${x2}" y2="${y2}"/>`;
const text = (cls, x, y, value) => `<text class="${cls}" x="${x}" y="${y}">${value}</text>`;
const snap = v => Math.floor(v) + 0.5;

// Linear interpolation between the knots of a fit
const expand = knots => {
    const values = [];
    for (let i = 0; i < SAMPLES; i++) {
        const n = Math.max(1, knots.findIndex(k => k[0] >= i));
        const [x0, y0] = knots[n - 1];
        const [x1, y1] = knots[n];
        values.push(y0 + (y1 - y0) * (i - x0) / (x1 - x0));
    }
    return values;
};

const polyline = (cls, values, left, scale) => {
    const dx = (RIGHT - left) / (SAMPLES - 1);
    const points = values.map((v, i) => `${(left + i * dx).toFixed(1)},${(scale.zero - v / scale.step * scale.px).toFixed(1)}`);
    return `<polyline class="${cls}" points="${points.join(' ')}"/>`;
};

const drawPlot = (left, [top, bottom], scale) => {
    let out = `<rect class="plot" x="${left}" y="${top}" width="${RIGHT - left}" height="${bottom - top}"/>`;
    for (let i = 0; i < 7; i++) {
        const x = snap(left + 10 + i * 40.9);
        out += line('grid', x, top + 1, x, bottom);
    }
    out += line('axis', left - 4, top, left - 4, bottom);
    for (let n = scale.from; n <= scale.to; n++) {
        const y = snap(scale.zero - n * scale.px);
        out += line(n === 0 ? 'zero' : 'grid', left, y, RIGHT, y);
        out += line('axis', left - 7, y, left - 4, y);
        out += text('y-label', left - 10, y + 4.5, (n * scale.step).toFixed(scale.digits || 0));
    }
    return out;
};

const drawChart = chart => {
    const { left, main, rest } = chart;
    const fit = expand(chart.fit);
    const trace = chart.trace || fit.map((v, i) => v + chart.residual[i]);
    const residual = chart.residual || trace.map((v, i) => v - fit[i]);

    let out = text('chart-title', 154, 12, chart.title);
    out += drawPlot(left, MAIN, main);
    out += polyline('fit', fit, left, main) + polyline('trace', trace, left, main);
    out += drawPlot(left, REST, rest) + polyline('trace', residual, left, rest);

    out += line('axis', left - 4, 362.5, RIGHT + 4, 362.5);
    for (let i = 0; i < 7; i++) {
        const x = left + 7 + i * 42;
        out += line('axis', x, 362.5, x, 365.5);
        out += text('x-label', x, 376, (3 + i / 2).toFixed(1));
    }
    out += text('x-title', left + 129, 394, 'Time');
    return `<svg viewBox="0 0 312 405">${out}</svg>`;
};

document.getElementById('charts').innerHTML = charts.map(drawChart).join('');
```
